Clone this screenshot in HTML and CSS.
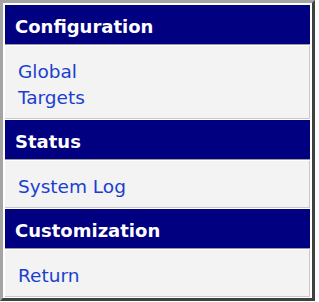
FILE: index.html
```html
<!DOCTYPE html>
<html lang="en">
<head>
  <meta charset="UTF-8">
  <title>Menu</title>
  <link rel="stylesheet" href="styles.css">
</head>
<body>

  <!-- SIDE MENU -->
  <nav class="menu">
    <div class="menu-head">Configuration</div>
    <div class="menu-body">
      <a href="#">Global</a>
      <a href="#">Targets</a>
    </div>

    <div class="menu-head">Status</div>
    <div class="menu-body">
      <a href="#">System Log</a>
    </div>

    <div class="menu-head">Customization</div>
    <div class="menu-body">
      <a href="#">Return</a>
    </div>
  </nav>

</body>
</html>
```

FILE: styles.css
```css
/* ===== PAGE ===== */
body {
  margin: 0;
  background: white;
  font-family: "DejaVu Sans", Verdana, sans-serif;
}

/* ===== MENU FRAME ===== */
.menu {
  width: 305px;
  border: 3px solid;
  border-color: #a4a4a4 #404040 #404040 #a4a4a4;
  padding: 2px 2px 1px 2px;
  display: flex;
  flex-direction: column;
  gap: 1px;
}

/* ===== SECTION HEADER ===== */
.menu-head {
  background: #000080;
  color: white;
  font-weight: bold;
  font-size: 18px;
  height: 35px;
  line-height: 35px;
  padding: 4px 0 0 10px;
  border-bottom: 1px solid #9a9a9a;
}

/* ===== LINKS ===== */
.menu-body {
  background: #f3f3f3;
  border-right: 1px solid #c8c8c8;
  border-bottom: 1px solid #c8c8c8;
  padding: 13px 0 7px 13px;
  display: flex;
  flex-direction: column;
}
.menu-body a {
  color: #1a3fd0;
  text-decoration: none;
  font-size: 18.5px;
  line-height: 26px;
}
.menu-body a:hover {
  text-decoration: underline;
}
```
